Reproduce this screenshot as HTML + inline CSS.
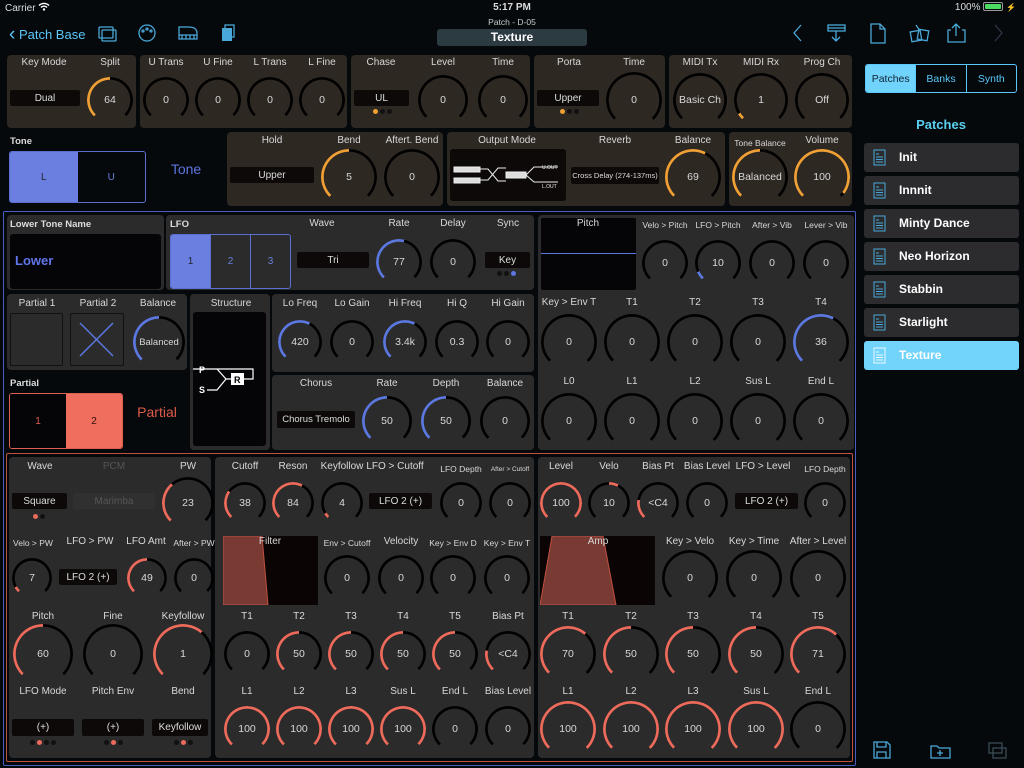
<!DOCTYPE html>
<html><head><meta charset="utf-8">
<style>
*{box-sizing:border-box;margin:0;padding:0}
body{width:1024px;height:768px;background:#05090c;font-family:"Liberation Sans",sans-serif;color:#ddd;position:relative;overflow:hidden}
.p{position:absolute;border-radius:4px}
.t{background:#2e2823}
.m{background:#2b2b2b}
.l{position:absolute;transform:translateX(-50%);white-space:nowrap;font-size:10px;line-height:14px;color:#d8d8d8}
.s{font-size:8.5px}
.k{position:absolute;width:var(--d);height:var(--d);margin-left:calc(var(--d)/-2);margin-top:calc(var(--d)/-2);display:flex;align-items:center;justify-content:center;font-size:10.5px;color:#d8d8d8}
.k::before{content:"";position:absolute;inset:0;border-radius:50%;background:conic-gradient(from 225deg,#000 0 calc(var(--a,0)*270deg),var(--c) 0 calc(var(--v,0)*270deg),#000 0 270deg,transparent 0);-webkit-mask:radial-gradient(closest-side,transparent calc(100% - 3px),#000 calc(100% - 2.5px));mask:radial-gradient(closest-side,transparent calc(100% - 3px),#000 calc(100% - 2.5px))}
.b{position:absolute;background:#0c0908;color:#ddd;font-size:10px;display:flex;align-items:center;justify-content:center;border-radius:2px;white-space:nowrap}
.dt{position:absolute;width:5px;height:5px;border-radius:50%;background:#111;margin-left:-2px;margin-top:-2px}
.or{--c:#f0a035}.bl{--c:#5b78e0}.rd{--c:#ee6a5a}
.li{position:absolute;left:864px;width:155px;height:29px;background:#2c2c2e;border-radius:3px;font-size:12px;font-weight:bold;color:#fff;line-height:29px;padding-left:35px}
.li svg{position:absolute;left:9px;top:6px}
</style></head><body>
<!-- status -->
<div style="position:absolute;left:5px;top:2px;font-size:10px">Carrier <svg width="12" height="9" viewBox="0 0 12 9"><path d="M1 3.5a7 7 0 0 1 10 0M3 5.5a4 4 0 0 1 6 0" stroke="#fff" stroke-width="1.4" fill="none"/><circle cx="6" cy="7.5" r="1.2" fill="#fff"/></svg></div>
<div style="position:absolute;left:0;width:1024px;top:2px;text-align:center;font-size:10px;font-weight:bold">5:17 PM</div>
<div style="position:absolute;right:8px;top:2px;font-size:10px">100% <span style="display:inline-block;width:20px;height:9px;border:1px solid #999;border-radius:2px;vertical-align:-1px;padding:1px"><span style="display:block;height:100%;background:#4cd964;border-radius:1px"></span></span> <span style="font-size:8px">⚡</span></div>
<!-- nav -->
<div style="position:absolute;left:9px;top:23px;font-size:13px;color:#5ac8fa"><span style="font-size:19px;position:relative;top:1px">‹</span> Patch Base</div>
<svg style="position:absolute;left:98px;top:24px" width="150" height="18" viewBox="0 0 150 18" fill="none" stroke="#4aa8d8" stroke-width="1.3">
<rect x="1" y="3" width="14" height="11" rx="1"/><rect x="4" y="6" width="14" height="11" rx="1"/>
<circle cx="49" cy="9" r="8"/><circle cx="45" cy="7" r="1"/><circle cx="49" cy="5" r="1"/><circle cx="53" cy="7" r="1"/>
<path d="M81 15h18v-6c0-5-4-6-9-6h-9z M81 11h18 M84 11v4M88 11v4M92 11v4M96 11v4"/>
<rect x="124" y="4" width="10" height="13" fill="#4aa8d8" stroke="none"/><rect x="127" y="1" width="9" height="12" /></svg>
<div style="position:absolute;left:0;width:1024px;top:17px;text-align:center;font-size:8.5px;color:#ccc">Patch - D-05</div>
<div style="position:absolute;left:437px;top:29px;width:150px;height:17px;background:#2c3a42;border-radius:3px;text-align:center;font-size:12px;font-weight:bold;line-height:17px;color:#fff">Texture</div>
<svg style="position:absolute;left:788px;top:22px" width="220" height="22" viewBox="0 0 220 22" fill="none" stroke="#4aa8d8" stroke-width="1.3">
<path d="M13 3l-7 8 7 8"/>
<rect x="40" y="3" width="17" height="6"/><path d="M48 9v10M44 15l4 4 4-4M40 6h17"/>
<path d="M83 2h9l5 5v14h-14z M92 2v5h5"/>
<rect x="123" y="9" width="10" height="10" transform="rotate(-10 128 14)"/><rect x="130" y="8" width="10" height="10" transform="rotate(10 135 13)"/><path d="M128 3l4 6"/>
<path d="M163 8h-3v12h17v-12h-3M168 14v-12M164 6l4-4 4 4"/>
<path d="M207 3l7 8-7 8" stroke="#334"/></svg>

<!-- top row panels -->
<div class="p t" style="left:7px;top:55px;width:129px;height:73px"></div>
<div class="p t" style="left:140px;top:55px;width:207px;height:73px"></div>
<div class="p t" style="left:351px;top:55px;width:179px;height:73px"></div>
<div class="p t" style="left:534px;top:55px;width:131px;height:73px"></div>
<div class="p t" style="left:669px;top:55px;width:183px;height:73px"></div>
<div class="p t" style="left:227px;top:132px;width:216px;height:74px"></div>
<div class="p t" style="left:447px;top:132px;width:278px;height:74px"></div>
<div class="p t" style="left:729px;top:132px;width:123px;height:74px"></div>

<div class="or">
<div class="l" style="left:44px;top:56px">Key Mode</div><div class="l" style="left:110px;top:56px">Split</div>
<div class="b" style="left:10px;top:90px;width:70px;height:16px">Dual</div>
<div class="k" style="left:110px;top:100px;--d:46px;--v:.5">64</div>
<div class="l" style="left:166px;top:56px">U Trans</div><div class="l" style="left:218px;top:56px">U Fine</div><div class="l" style="left:270px;top:56px">L Trans</div><div class="l" style="left:322px;top:56px">L Fine</div>
<div class="k" style="left:166px;top:100px;--d:46px">0</div><div class="k" style="left:218px;top:100px;--d:46px">0</div><div class="k" style="left:270px;top:100px;--d:46px">0</div><div class="k" style="left:322px;top:100px;--d:46px">0</div>
<div class="l" style="left:381px;top:56px">Chase</div><div class="l" style="left:443px;top:56px">Level</div><div class="l" style="left:503px;top:56px">Time</div>
<div class="b" style="left:354px;top:90px;width:55px;height:16px">UL</div>
<div class="dt" style="left:375px;top:111px;background:#f0a035"></div><div class="dt" style="left:382px;top:111px"></div><div class="dt" style="left:389px;top:111px"></div>
<div class="k" style="left:443px;top:100px;--d:50px">0</div><div class="k" style="left:503px;top:100px;--d:50px">0</div>
<div class="l" style="left:569px;top:56px">Porta</div><div class="l" style="left:634px;top:56px">Time</div>
<div class="b" style="left:537px;top:90px;width:62px;height:16px">Upper</div>
<div class="dt" style="left:562px;top:111px;background:#f0a035"></div><div class="dt" style="left:569px;top:111px"></div><div class="dt" style="left:576px;top:111px"></div>
<div class="k" style="left:634px;top:100px;--d:56px">0</div>
<div class="l" style="left:700px;top:56px">MIDI Tx</div><div class="l" style="left:761px;top:56px">MIDI Rx</div><div class="l" style="left:822px;top:56px">Prog Ch</div>
<div class="k" style="left:700px;top:100px;--d:54px">Basic Ch</div><div class="k" style="left:761px;top:100px;--d:54px;--v:.05">1</div><div class="k" style="left:822px;top:100px;--d:54px">Off</div>

<div class="l" style="left:272px;top:134px">Hold</div><div class="l" style="left:349px;top:134px">Bend</div><div class="l" style="left:412px;top:134px">Aftert. Bend</div>
<div class="b" style="left:230px;top:167px;width:84px;height:16px">Upper</div>
<div class="k" style="left:349px;top:177px;--d:56px;--v:.5">5</div><div class="k" style="left:412px;top:177px;--d:56px">0</div>
<div class="l" style="left:507px;top:134px">Output Mode</div><div class="l" style="left:615px;top:134px">Reverb</div><div class="l" style="left:693px;top:134px">Balance</div>
<div style="position:absolute;left:450px;top:149px;width:116px;height:52px;background:#0c0908;border-radius:3px">
<svg width="116" height="52" viewBox="0 0 116 52" fill="none" stroke="#eee" stroke-width="1"><rect x="4" y="18" width="26" height="5" fill="#ddd"/><rect x="4" y="29" width="26" height="5" fill="#ddd"/><path d="M30 20h8l10 12h8M30 31h8l10-12h8"/><rect x="56" y="23" width="20" height="6" fill="#ddd"/><path d="M76 26l8-8h24M76 26l8 7h24"/><text x="92" y="20" font-size="5" fill="#eee" stroke="none">U.OUT</text><text x="92" y="39" font-size="5" fill="#eee" stroke="none">L.OUT</text></svg></div>
<div class="b" style="left:571px;top:167px;width:88px;height:17px;font-size:7.5px">Cross Delay (274-137ms)</div>
<div class="k" style="left:693px;top:177px;--d:56px;--v:.6">69</div>
<div class="l s" style="left:760px;top:136px">Tone Balance</div><div class="l" style="left:822px;top:134px">Volume</div>
<div class="k" style="left:760px;top:177px;--d:56px;--v:.5">Balanced</div><div class="k" style="left:822px;top:177px;--d:56px;--v:.97">100</div>
</div>

<!-- Tone -->
<div style="position:absolute;left:10px;top:136px;font-size:9.5px;font-weight:bold">Tone</div>
<div style="position:absolute;left:9px;top:151px;width:137px;height:52px;border:1px solid #5a6fd0;border-radius:3px;display:flex;overflow:hidden;font-size:10px">
<div style="flex:1;background:#6b7fe0;color:#223;display:flex;align-items:center;justify-content:center">L</div><div style="flex:1;display:flex;align-items:center;justify-content:center;color:#6b7fe0">U</div></div>
<div class="l" style="left:186px;top:161px;font-size:14px;line-height:16px;color:#5f75e0">Tone</div>

<!-- blue section -->
<div style="position:absolute;left:3px;top:211px;width:853px;height:555px;border:1px solid #4a5cc0;border-radius:2px"></div>
<div class="p m" style="left:7px;top:215px;width:157px;height:75px"></div>
<div class="p m" style="left:166px;top:215px;width:368px;height:75px"></div>
<div class="p m" style="left:7px;top:294px;width:180px;height:76px"></div>
<div class="p m" style="left:190px;top:294px;width:80px;height:156px"></div>
<div class="p m" style="left:272px;top:294px;width:262px;height:78px"></div>
<div class="p m" style="left:272px;top:375px;width:262px;height:75px"></div>
<div class="p m" style="left:538px;top:215px;width:316px;height:235px"></div>
<div class="bl">
<div style="position:absolute;left:10px;top:219px;font-size:9.5px;font-weight:bold">Lower Tone Name</div>
<div style="position:absolute;left:10px;top:234px;width:151px;height:55px;background:#050508;border-radius:3px;font-size:13px;font-weight:bold;color:#5f75e8;padding:19px 0 0 5px">Lower</div>
<div style="position:absolute;left:170px;top:219px;font-size:9.5px;font-weight:bold">LFO</div>
<div style="position:absolute;left:170px;top:234px;width:121px;height:55px;border:1px solid #5a6fd0;border-radius:3px;display:flex;overflow:hidden;font-size:10px;color:#6b7fe0">
<div style="flex:1;background:#6b7fe0;color:#223;display:flex;align-items:center;justify-content:center">1</div><div style="flex:1;border-left:1px solid #5a6fd0;display:flex;align-items:center;justify-content:center">2</div><div style="flex:1;border-left:1px solid #5a6fd0;display:flex;align-items:center;justify-content:center">3</div></div>
<div class="l" style="left:322px;top:217px">Wave</div><div class="l" style="left:399px;top:217px">Rate</div><div class="l" style="left:453px;top:217px">Delay</div><div class="l" style="left:508px;top:217px">Sync</div>
<div class="b" style="left:297px;top:252px;width:72px;height:16px">Tri</div>
<div class="k" style="left:399px;top:262px;--d:46px;--v:.55">77</div><div class="k" style="left:453px;top:262px;--d:46px">0</div>
<div class="b" style="left:485px;top:252px;width:45px;height:16px">Key</div>
<div class="dt" style="left:499px;top:273px"></div><div class="dt" style="left:506px;top:273px"></div><div class="dt" style="left:513px;top:273px;background:#5b78e0"></div>

<div class="l" style="left:37px;top:297px">Partial 1</div><div class="l" style="left:98px;top:297px">Partial 2</div><div class="l" style="left:158px;top:297px">Balance</div>
<div style="position:absolute;left:10px;top:313px;width:53px;height:53px;border:1.5px solid #111;border-radius:2px"></div>
<div style="position:absolute;left:70px;top:313px;width:54px;height:53px;border:1.5px solid #111;border-radius:2px"><svg width="51" height="50"><path d="M9 9l33 33M42 9l-33 33" stroke="#5b78e0" stroke-width="1.5"/></svg></div>
<div class="k" style="left:159px;top:342px;--d:52px;--v:.5;font-size:9.5px">Balanced</div>

<div class="l" style="left:231px;top:297px">Structure</div>
<div style="position:absolute;left:193px;top:312px;width:73px;height:134px;background:#050508;border-radius:3px"><svg width="73" height="134"><g stroke="#fff" stroke-width="1.2" fill="none"><path d="M14 57h10l9 10h27v-10h-60M14 78h10l9-11"/></g><rect x="38" y="61" width="13" height="12" fill="#fff"/><text x="41" y="71" font-size="9" font-weight="bold" fill="#000" font-family="Liberation Sans">R</text><text x="6" y="61" font-size="9" font-weight="bold" fill="#fff" font-family="Liberation Sans">P</text><text x="6" y="81" font-size="9" font-weight="bold" fill="#fff" font-family="Liberation Sans">S</text></svg></div>

<div class="l" style="left:300px;top:297px">Lo Freq</div><div class="l" style="left:352px;top:297px">Lo Gain</div><div class="l" style="left:405px;top:297px">Hi Freq</div><div class="l" style="left:457px;top:297px">Hi Q</div><div class="l" style="left:508px;top:297px">Hi Gain</div>
<div class="k" style="left:300px;top:342px;--d:44px;--v:.6">420</div><div class="k" style="left:352px;top:342px;--d:44px">0</div><div class="k" style="left:405px;top:342px;--d:44px;--v:.6">3.4k</div><div class="k" style="left:457px;top:342px;--d:44px">0.3</div><div class="k" style="left:508px;top:342px;--d:44px">0</div>
<div class="l" style="left:316px;top:377px">Chorus</div><div class="l" style="left:387px;top:377px">Rate</div><div class="l" style="left:446px;top:377px">Depth</div><div class="l" style="left:505px;top:377px">Balance</div>
<div class="b" style="left:277px;top:411px;width:78px;height:17px;font-size:9.5px">Chorus Tremolo</div>
<div class="k" style="left:387px;top:421px;--d:50px;--v:.5">50</div><div class="k" style="left:446px;top:421px;--d:50px;--v:.5">50</div><div class="k" style="left:505px;top:421px;--d:50px">0</div>

<div style="position:absolute;left:541px;top:218px;width:95px;height:72px;background:#050508;border-radius:2px"><div style="position:absolute;left:0;right:0;top:35px;height:1px;background:#5b78e0"></div></div>
<div class="l" style="left:588px;top:217px">Pitch</div>
<div class="l s" style="left:665px;top:218px">Velo &gt; Pitch</div><div class="l s" style="left:718px;top:218px">LFO &gt; Pitch</div><div class="l s" style="left:772px;top:218px">After &gt; Vib</div><div class="l s" style="left:826px;top:218px">Lever &gt; Vib</div>
<div class="k" style="left:665px;top:263px;--d:46px">0</div><div class="k" style="left:718px;top:263px;--d:46px;--v:.08">10</div><div class="k" style="left:772px;top:263px;--d:46px">0</div><div class="k" style="left:826px;top:263px;--d:46px">0</div>
<div class="l" style="left:569px;top:296px">Key &gt; Env T</div><div class="l" style="left:632px;top:296px">T1</div><div class="l" style="left:695px;top:296px">T2</div><div class="l" style="left:758px;top:296px">T3</div><div class="l" style="left:821px;top:296px">T4</div>
<div class="k" style="left:569px;top:342px;--d:56px">0</div><div class="k" style="left:632px;top:342px;--d:56px">0</div><div class="k" style="left:695px;top:342px;--d:56px">0</div><div class="k" style="left:758px;top:342px;--d:56px">0</div><div class="k" style="left:821px;top:342px;--d:56px;--v:.6">36</div>
<div class="l" style="left:569px;top:375px">L0</div><div class="l" style="left:632px;top:375px">L1</div><div class="l" style="left:695px;top:375px">L2</div><div class="l" style="left:758px;top:375px">Sus L</div><div class="l" style="left:821px;top:375px">End L</div>
<div class="k" style="left:569px;top:421px;--d:56px">0</div><div class="k" style="left:632px;top:421px;--d:56px">0</div><div class="k" style="left:695px;top:421px;--d:56px">0</div><div class="k" style="left:758px;top:421px;--d:56px">0</div><div class="k" style="left:821px;top:421px;--d:56px">0</div>
</div>

<!-- partial -->
<div style="position:absolute;left:10px;top:378px;font-size:9.5px;font-weight:bold">Partial</div>
<div style="position:absolute;left:9px;top:393px;width:114px;height:56px;border:1px solid #e06050;border-radius:3px;display:flex;overflow:hidden;font-size:10px">
<div style="flex:1;background:#050508;color:#e06050;display:flex;align-items:center;justify-content:center">1</div><div style="flex:1;background:#ef6e5e;color:#311;display:flex;align-items:center;justify-content:center">2</div></div>
<div class="l" style="left:157px;top:404px;font-size:14px;line-height:16px;color:#e05a4a">Partial</div>

<!-- red section -->
<div style="position:absolute;left:6px;top:453px;width:847px;height:309px;border:1px solid #c0503f;border-radius:2px"></div>
<div class="p m" style="left:9px;top:457px;width:202px;height:301px"></div>
<div class="p m" style="left:215px;top:457px;width:319px;height:301px"></div>
<div class="p m" style="left:538px;top:457px;width:312px;height:301px"></div>
<div class="rd">
<div class="l" style="left:40px;top:460px">Wave</div><div class="l" style="left:114px;top:460px;color:#555">PCM</div><div class="l" style="left:188px;top:460px">PW</div>
<div class="b" style="left:12px;top:493px;width:55px;height:16px">Square</div>
<div class="dt" style="left:35px;top:516px;background:#ee6a5a"></div><div class="dt" style="left:42px;top:516px"></div>
<div class="b" style="left:73px;top:493px;width:82px;height:16px;background:#303030;color:#555">Marimba</div>
<div class="k" style="left:188px;top:503px;--d:52px;--v:.35">23</div>
<div class="l s" style="left:33px;top:536px">Velo &gt; PW</div><div class="l" style="left:90px;top:535px">LFO &gt; PW</div><div class="l" style="left:146px;top:535px">LFO Amt</div><div class="l s" style="left:194px;top:536px">After &gt; PW</div>
<div class="k" style="left:32px;top:578px;--d:40px;--v:.06">7</div>
<div class="b" style="left:59px;top:569px;width:58px;height:16px">LFO 2 (+)</div>
<div class="k" style="left:147px;top:578px;--d:40px;--v:.5">49</div><div class="k" style="left:194px;top:578px;--d:40px">0</div>
<div class="l" style="left:43px;top:610px">Pitch</div><div class="l" style="left:113px;top:610px">Fine</div><div class="l" style="left:183px;top:610px">Keyfollow</div>
<div class="k" style="left:43px;top:654px;--d:60px;--v:.5">60</div><div class="k" style="left:113px;top:654px;--d:60px">0</div><div class="k" style="left:183px;top:654px;--d:60px;--v:.65">1</div>
<div class="l" style="left:43px;top:685px">LFO Mode</div><div class="l" style="left:113px;top:685px">Pitch Env</div><div class="l" style="left:183px;top:685px">Bend</div>
<div class="b" style="left:12px;top:719px;width:62px;height:17px">(+)</div><div class="b" style="left:82px;top:719px;width:62px;height:17px">(+)</div><div class="b" style="left:152px;top:719px;width:56px;height:17px">Keyfollow</div>
<div class="dt" style="left:32px;top:742px"></div><div class="dt" style="left:39px;top:742px;background:#ee6a5a"></div><div class="dt" style="left:46px;top:742px"></div><div class="dt" style="left:53px;top:742px"></div>
<div class="dt" style="left:106px;top:742px"></div><div class="dt" style="left:113px;top:742px;background:#ee6a5a"></div><div class="dt" style="left:120px;top:742px"></div>
<div class="dt" style="left:176px;top:742px"></div><div class="dt" style="left:183px;top:742px;background:#ee6a5a"></div><div class="dt" style="left:190px;top:742px"></div>

<div class="l" style="left:245px;top:460px">Cutoff</div><div class="l" style="left:293px;top:460px">Reson</div><div class="l" style="left:342px;top:460px">Keyfollow</div><div class="l" style="left:395px;top:460px">LFO &gt; Cutoff</div><div class="l s" style="left:461px;top:462px">LFO Depth</div><div class="l" style="left:510px;top:463px;font-size:6.5px">After &gt; Cutoff</div>
<div class="k" style="left:245px;top:503px;--d:42px;--v:.3">38</div><div class="k" style="left:293px;top:503px;--d:42px;--v:.6">84</div><div class="k" style="left:342px;top:503px;--d:42px;--v:.05">4</div>
<div class="b" style="left:369px;top:493px;width:63px;height:16px">LFO 2 (+)</div>
<div class="k" style="left:461px;top:503px;--d:42px">0</div><div class="k" style="left:510px;top:503px;--d:42px">0</div>
<div style="position:absolute;left:223px;top:536px;width:95px;height:69px;background:#0a0504"><svg width="95" height="69"><path d="M0 0h39l6 69h-45z" fill="#7a3a34" stroke="#c0503f"/></svg></div>
<div class="l" style="left:270px;top:535px">Filter</div>
<div class="l s" style="left:347px;top:536px">Env &gt; Cutoff</div><div class="l" style="left:401px;top:535px">Velocity</div><div class="l s" style="left:453px;top:536px">Key &gt; Env D</div><div class="l s" style="left:507px;top:536px">Key &gt; Env T</div>
<div class="k" style="left:347px;top:578px;--d:46px">0</div><div class="k" style="left:401px;top:578px;--d:46px">0</div><div class="k" style="left:453px;top:578px;--d:46px">0</div><div class="k" style="left:507px;top:578px;--d:46px">0</div>
<div class="l" style="left:247px;top:610px">T1</div><div class="l" style="left:299px;top:610px">T2</div><div class="l" style="left:351px;top:610px">T3</div><div class="l" style="left:403px;top:610px">T4</div><div class="l" style="left:455px;top:610px">T5</div><div class="l" style="left:508px;top:610px">Bias Pt</div>
<div class="k" style="left:247px;top:654px;--d:46px">0</div><div class="k" style="left:299px;top:654px;--d:46px;--v:.5">50</div><div class="k" style="left:351px;top:654px;--d:46px;--v:.5">50</div><div class="k" style="left:403px;top:654px;--d:46px;--v:.5">50</div><div class="k" style="left:455px;top:654px;--d:46px;--v:.5">50</div><div class="k" style="left:508px;top:654px;--d:46px;--v:.2">&lt;C4</div>
<div class="l" style="left:247px;top:685px">L1</div><div class="l" style="left:299px;top:685px">L2</div><div class="l" style="left:351px;top:685px">L3</div><div class="l" style="left:403px;top:685px">Sus L</div><div class="l" style="left:455px;top:685px">End L</div><div class="l" style="left:508px;top:685px">Bias Level</div>
<div class="k" style="left:247px;top:729px;--d:46px;--v:1">100</div><div class="k" style="left:299px;top:729px;--d:46px;--v:1">100</div><div class="k" style="left:351px;top:729px;--d:46px;--v:1">100</div><div class="k" style="left:403px;top:729px;--d:46px;--v:1">100</div><div class="k" style="left:455px;top:729px;--d:46px">0</div><div class="k" style="left:508px;top:729px;--d:46px">0</div>

<div class="l" style="left:561px;top:460px">Level</div><div class="l" style="left:609px;top:460px">Velo</div><div class="l" style="left:658px;top:460px">Bias Pt</div><div class="l" style="left:707px;top:460px">Bias Level</div><div class="l" style="left:763px;top:460px">LFO &gt; Level</div><div class="l s" style="left:825px;top:462px">LFO Depth</div>
<div class="k" style="left:561px;top:503px;--d:42px;--v:1">100</div><div class="k" style="left:609px;top:503px;--d:42px;--a:.5;--v:.6">10</div><div class="k" style="left:658px;top:503px;--d:42px;--v:.2">&lt;C4</div><div class="k" style="left:707px;top:503px;--d:42px">0</div>
<div class="b" style="left:735px;top:493px;width:63px;height:16px">LFO 2 (+)</div>
<div class="k" style="left:825px;top:503px;--d:42px">0</div>
<div style="position:absolute;left:540px;top:536px;width:115px;height:69px;background:#0a0504"><svg width="115" height="69"><path d="M0 69l12-69h51l13 69z" fill="#7a3a34" stroke="#c0503f"/></svg></div>
<div class="l" style="left:598px;top:535px">Amp</div>
<div class="l" style="left:690px;top:535px">Key &gt; Velo</div><div class="l" style="left:754px;top:535px">Key &gt; Time</div><div class="l" style="left:818px;top:535px">After &gt; Level</div>
<div class="k" style="left:690px;top:578px;--d:56px">0</div><div class="k" style="left:754px;top:578px;--d:56px">0</div><div class="k" style="left:818px;top:578px;--d:56px">0</div>
<div class="l" style="left:568px;top:610px">T1</div><div class="l" style="left:631px;top:610px">T2</div><div class="l" style="left:693px;top:610px">T3</div><div class="l" style="left:756px;top:610px">T4</div><div class="l" style="left:818px;top:610px">T5</div>
<div class="k" style="left:568px;top:654px;--d:56px;--v:.65">70</div><div class="k" style="left:631px;top:654px;--d:56px;--v:.5">50</div><div class="k" style="left:693px;top:654px;--d:56px;--v:.5">50</div><div class="k" style="left:756px;top:654px;--d:56px;--v:.5">50</div><div class="k" style="left:818px;top:654px;--d:56px;--v:.66">71</div>
<div class="l" style="left:568px;top:685px">L1</div><div class="l" style="left:631px;top:685px">L2</div><div class="l" style="left:693px;top:685px">L3</div><div class="l" style="left:756px;top:685px">Sus L</div><div class="l" style="left:818px;top:685px">End L</div>
<div class="k" style="left:568px;top:729px;--d:56px;--v:1">100</div><div class="k" style="left:631px;top:729px;--d:56px;--v:1">100</div><div class="k" style="left:693px;top:729px;--d:56px;--v:1">100</div><div class="k" style="left:756px;top:729px;--d:56px;--v:1">100</div><div class="k" style="left:818px;top:729px;--d:56px">0</div>
</div>

<!-- sidebar -->
<div style="position:absolute;left:865px;top:64px;width:152px;height:29px;border:1px solid #5ac8fa;border-radius:3px;display:flex;overflow:hidden;font-size:10.5px;color:#5ac8fa">
<div style="flex:1;background:#6fd3fc;color:#123;display:flex;align-items:center;justify-content:center">Patches</div><div style="flex:1;border-left:1px solid #5ac8fa;display:flex;align-items:center;justify-content:center">Banks</div><div style="flex:1;border-left:1px solid #5ac8fa;display:flex;align-items:center;justify-content:center">Synth</div></div>
<div class="l" style="left:941px;top:116px;font-size:13px;line-height:17px;font-weight:bold;color:#5ad0f0">Patches</div>
<div class="li" style="top:143px"><svg width="13" height="17"><rect x="1" y="1" width="11" height="15" fill="none" stroke="#4aa8d8"/><path d="M3 5h3M3 8h7M3 10.5h7M3 13h7" stroke="#4aa8d8"/></svg>Init</div>
<div class="li" style="top:176px"><svg width="13" height="17"><rect x="1" y="1" width="11" height="15" fill="none" stroke="#4aa8d8"/><path d="M3 5h3M3 8h7M3 10.5h7M3 13h7" stroke="#4aa8d8"/></svg>Innnit</div>
<div class="li" style="top:209px"><svg width="13" height="17"><rect x="1" y="1" width="11" height="15" fill="none" stroke="#4aa8d8"/><path d="M3 5h3M3 8h7M3 10.5h7M3 13h7" stroke="#4aa8d8"/></svg>Minty Dance</div>
<div class="li" style="top:242px"><svg width="13" height="17"><rect x="1" y="1" width="11" height="15" fill="none" stroke="#4aa8d8"/><path d="M3 5h3M3 8h7M3 10.5h7M3 13h7" stroke="#4aa8d8"/></svg>Neo Horizon</div>
<div class="li" style="top:275px"><svg width="13" height="17"><rect x="1" y="1" width="11" height="15" fill="none" stroke="#4aa8d8"/><path d="M3 5h3M3 8h7M3 10.5h7M3 13h7" stroke="#4aa8d8"/></svg>Stabbin</div>
<div class="li" style="top:308px"><svg width="13" height="17"><rect x="1" y="1" width="11" height="15" fill="none" stroke="#4aa8d8"/><path d="M3 5h3M3 8h7M3 10.5h7M3 13h7" stroke="#4aa8d8"/></svg>Starlight</div>
<div class="li" style="top:341px;background:#72d4fb"><svg width="13" height="17"><rect x="1" y="1" width="11" height="15" fill="none" stroke="#eaf8ff"/><path d="M3 5h3M3 8h7M3 10.5h7M3 13h7" stroke="#eaf8ff"/></svg>Texture</div>
<svg style="position:absolute;left:872px;top:740px" width="140" height="20" viewBox="0 0 140 20" fill="none" stroke="#4aa8d8" stroke-width="1.3">
<path d="M2 2h13l3 3v13h-16z M5 2v5h9v-5M5 18v-6h9v6"/>
<path d="M59 6h6l2 2h11v10h-19z M68 10v6M65 13h6"/>
<g stroke="#3a4a55"><rect x="117" y="3" width="13" height="10"/><rect x="121" y="8" width="13" height="10"/></g></svg>
</body></html>
